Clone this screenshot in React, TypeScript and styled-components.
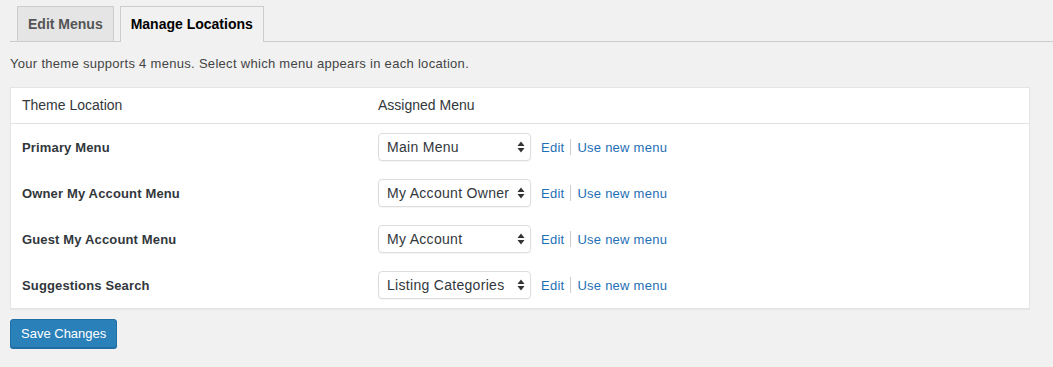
import React from "react";
import styled, { createGlobalStyle } from "styled-components";

const Global = createGlobalStyle`
  html, body { margin: 0; padding: 0; background: #f1f1f1; }
  body { font-family: "Liberation Sans", Arial, sans-serif; color: #444; font-size: 13px; }
`;

const Page = styled.div`
  padding: 6px 23px 20px 10px;
  width: 1020px;
`;

const TabBar = styled.div`
  display: flex;
  border-bottom: 1px solid #ccc;
  margin-right: -23px;
  padding-left: 7px;
  gap: 6px;
`;

const Tab = styled.div<{ $active?: boolean }>`
  font-size: 14px;
  font-weight: 700;
  line-height: 24px;
  padding: 5px 10px;
  border: 1px solid #ccc;
  border-bottom: none;
  margin-bottom: ${(p) => (p.$active ? "-1px" : "0")};
  background: ${(p) => (p.$active ? "#f1f1f1" : "#e5e5e5")};
  color: ${(p) => (p.$active ? "#000" : "#555")};
  padding-bottom: ${(p) => (p.$active ? "6px" : "5px")};
`;

const Desc = styled.p`
  margin: 12px 0 0;
  font-size: 13px;
  line-height: 1.5;
  letter-spacing: 0.3px;
  color: #444;
`;

const Table = styled.div`
  margin-top: 13px;
  background: #fff;
  border: 1px solid #e5e5e5;
  box-shadow: 0 1px 1px rgba(0, 0, 0, 0.04);
`;

const HeadRow = styled.div`
  display: grid;
  grid-template-columns: 356px 1fr;
  height: 35px;
  align-items: center;
  border-bottom: 1px solid #e1e1e1;
  font-size: 14px;
  color: #32373c;
`;

const Row = styled.div`
  display: grid;
  grid-template-columns: 356px 1fr;
  height: 46px;
  align-items: center;
  padding-top: 1px;
  box-sizing: border-box;
`;

const Cell = styled.div`
  padding-left: 11px;
`;

const Label = styled.div`
  padding-left: 11px;
  font-weight: 700;
  font-size: 13px;
  letter-spacing: 0.15px;
  color: #32373c;
`;

const Actions = styled.div`
  display: flex;
  align-items: center;
`;

const SelectBox = styled.div`
  width: 143px;
  height: 26px;
  box-sizing: content-box;
  border: 1px solid #ddd;
  border-radius: 4px;
  background: #fff;
  display: flex;
  align-items: center;
  justify-content: space-between;
  padding: 0 0 0 8px;
  margin-right: 4px;
  font-size: 14px;
  letter-spacing: 0.3px;
  color: #32373c;
  box-shadow: 0 1px 1px rgba(0, 0, 0, 0.04);
`;

const Arrows = styled.svg`
  margin-right: 5px;
  flex: none;
`;

const Link = styled.a`
  color: #1e6fb5;
  text-decoration: none;
  font-size: 13px;
  letter-spacing: 0.25px;
  padding: 0 6px;
`;

const Sep = styled.span`
  width: 1px;
  height: 16px;
  background: #ccc;
`;

const Button = styled.button`
  margin-top: 10px;
  background: #2a80b9;
  border: 1px solid #1f6fa5;
  border-radius: 3px;
  color: #fff;
  font-family: inherit;
  font-size: 13px;
  height: 29px;
  padding: 0 10px;
  box-shadow: 0 1px 0 #1f6fa5;
`;

const rows = [
  ["Primary Menu", "Main Menu"],
  ["Owner My Account Menu", "My Account Owner"],
  ["Guest My Account Menu", "My Account"],
  ["Suggestions Search", "Listing Categories"],
];

export default function App() {
  return (
    <>
      <Global />
      <Page>
        <TabBar>
          <Tab>Edit Menus</Tab>
          <Tab $active>Manage Locations</Tab>
        </TabBar>
        <Desc>Your theme supports 4 menus. Select which menu appears in each location.</Desc>
        <Table>
          <HeadRow>
            <Cell>Theme Location</Cell>
            <Cell>Assigned Menu</Cell>
          </HeadRow>
          <div>
            {rows.map(([l, m]) => (
              <Row key={l}>
                <Label>{l}</Label>
                <Cell>
                  <Actions>
                    <SelectBox>
                      <span>{m}</span>
                      <Arrows width="8" height="12" viewBox="0 0 8 12">
                        <path d="M4 0.5 L7.5 5 H0.5 Z" fill="#333" />
                        <path d="M4 11.5 L7.5 7 H0.5 Z" fill="#333" />
                      </Arrows>
                    </SelectBox>
                    <Link href="#">Edit</Link>
                    <Sep />
                    <Link href="#">Use new menu</Link>
                  </Actions>
                </Cell>
              </Row>
            ))}
          </div>
        </Table>
        <Button>Save Changes</Button>
      </Page>
    </>
  );
}
